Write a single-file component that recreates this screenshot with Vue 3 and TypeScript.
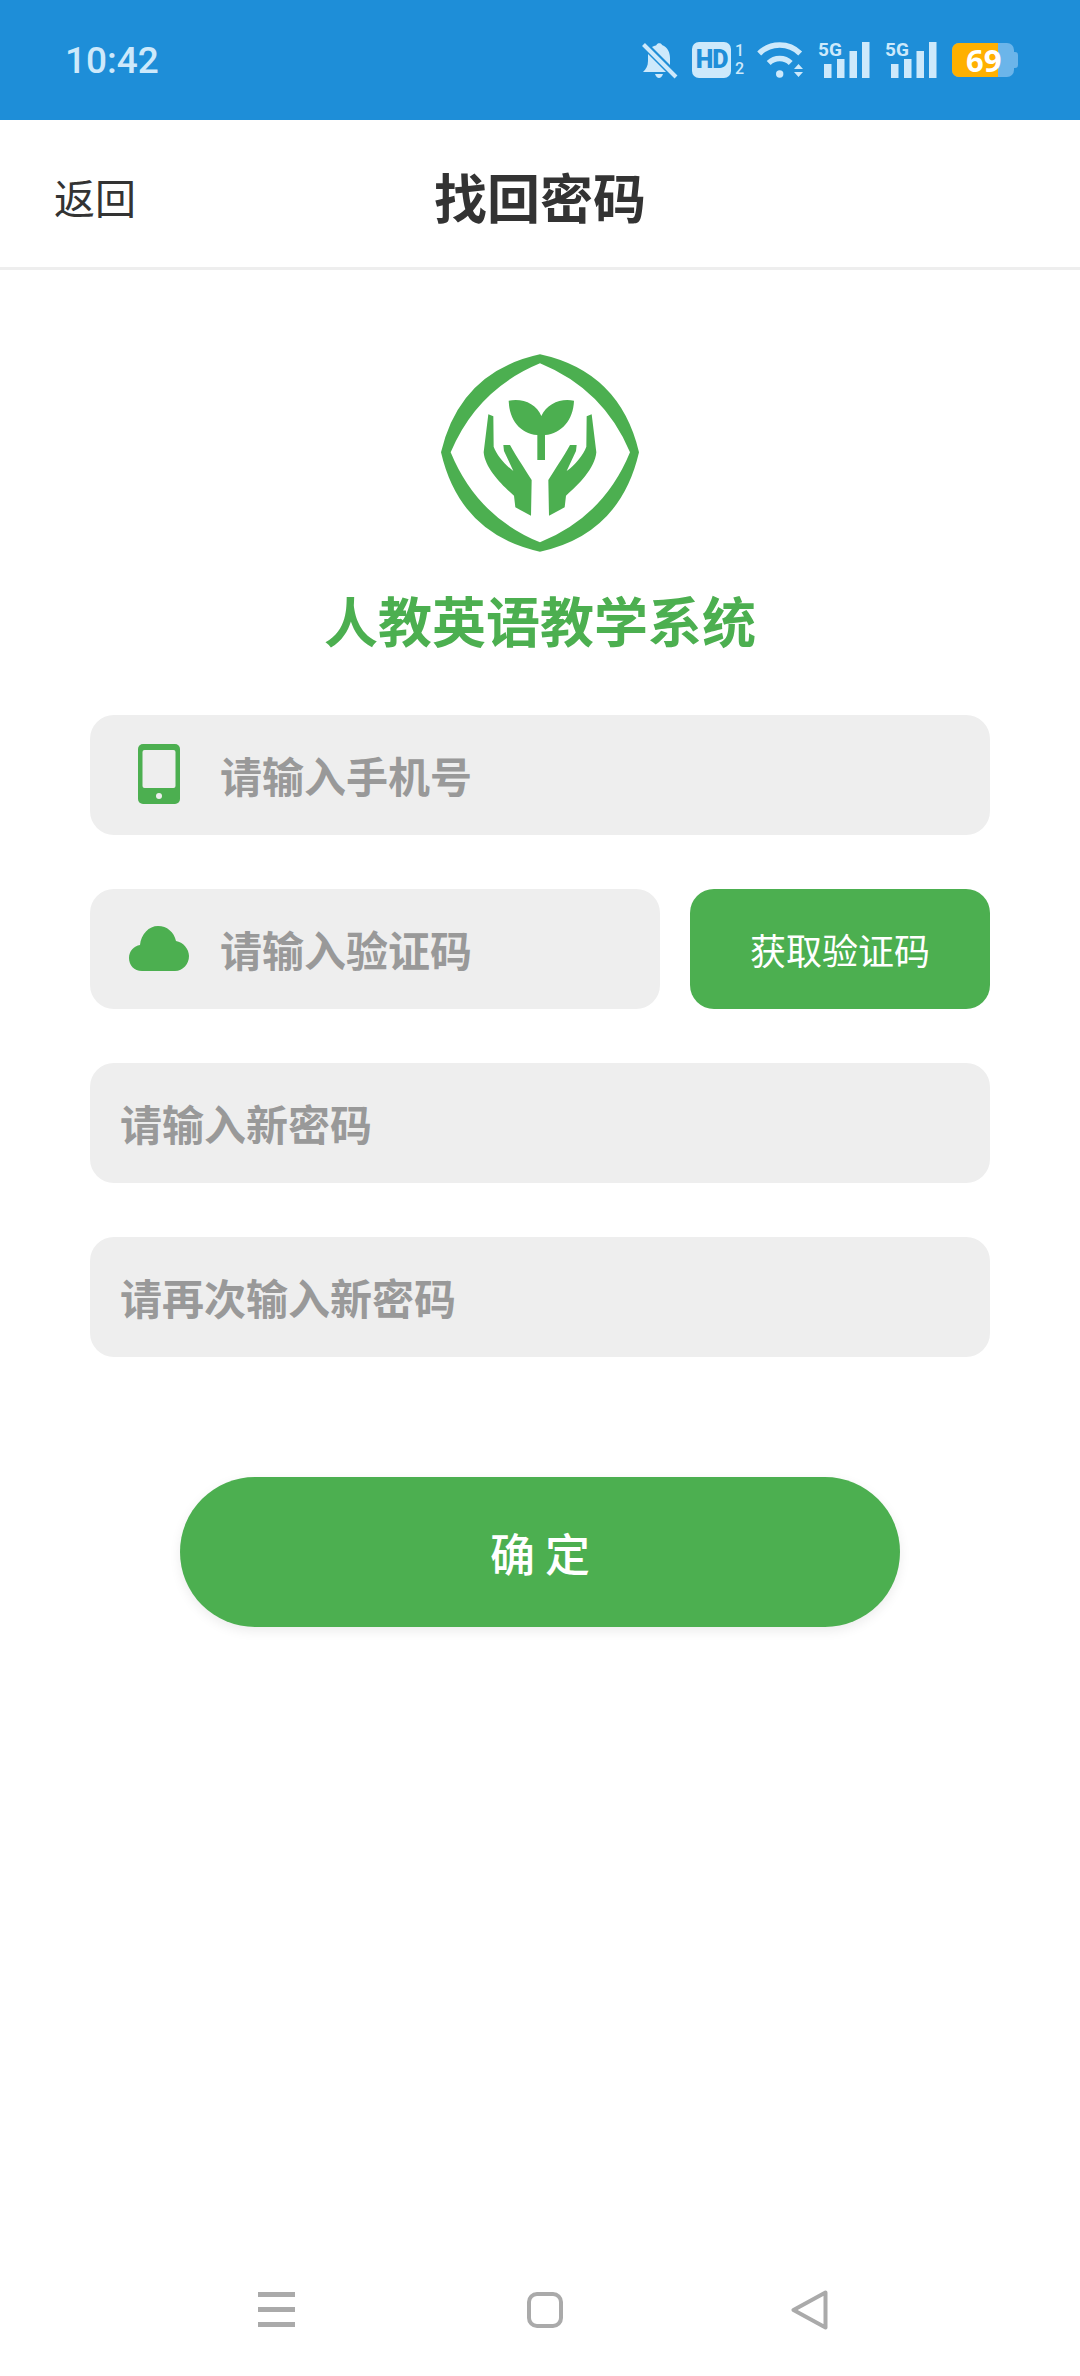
<script setup lang="ts">
import { ref } from 'vue'

const phone = ref('')
const code = ref('')
const newPassword = ref('')
const repeatPassword = ref('')
</script>

<template>
  <div class="page">
    <div class="status-bar">
      <span class="time">10:42</span>
      <div class="status-icons">
        <svg class="bell" width="35" height="36" viewBox="0 0 35 36">
          <path d="M6 12 L24 30 L1 30 C4 27 6 24 6 19 Z" />
          <path d="M10 5 C12 4 14 3.5 14.5 3 C15 0.5 19.5 0.5 20 3 C26 5 28 11 28 16 L28 23 Z" />
          <path d="M13 32 H21 Q19.5 36 17 36 Q14.5 36 13 32 Z" />
          <path d="M1.5 2.5 L34 35" class="slash" />
        </svg>
        <div class="hd">
          <span class="hd-box">HD</span>
          <span class="hd-sims"><i>1</i><i>2</i></span>
        </div>
        <svg class="wifi" width="45" height="36" viewBox="0 0 45 36">
          <path d="M1.2 11.5 A29 29 0 0 1 42.2 11.5" class="arc" />
          <path d="M10.7 21 A15.5 15.5 0 0 1 32.7 21" class="arc" />
          <circle cx="21.7" cy="32" r="3.7" />
          <path d="M36 27 L40.5 22 L45 27 Z M36 30 H45 L40.5 35 Z" />
        </svg>
        <svg v-for="n in 2" :key="n" class="signal" width="52" height="36" viewBox="0 0 52 36">
          <text x="0" y="14" class="net">5G</text>
          <rect x="6" y="22" width="7.5" height="14" />
          <rect x="19" y="17" width="7.5" height="19" />
          <rect x="31.5" y="9" width="7.5" height="27" />
          <rect x="44" y="0" width="7.5" height="36" />
        </svg>
        <div class="battery">
          <div class="battery-fill"></div>
          <span class="battery-level">69</span>
        </div>
      </div>
    </div>

    <header class="top-bar">
      <span class="back">返回</span>
      <h1>找回密码</h1>
    </header>

    <main class="content">
      <svg class="logo" width="198" height="198" viewBox="33 28 594 592">
        <path
          fill-rule="evenodd"
          d="M330 28 Q570 80 627 322 Q570 568 330 620 Q90 568 33 322 Q90 80 330 28 Z
             M330 55 Q141 133 62 322 Q141 515 330 592 Q521 515 600 322 Q521 133 330 55 Z"
        />
        <path d="M236 167 C275 158 320 175 334 213 C350 175 395 158 432 167 C430 225 395 265 345 270 L345 345 L322 345 L322 270 C270 265 238 225 236 167 Z" />
        <path d="M175 208 L190 214 L191 305 C200 330 225 360 250 378 L222 318 L220 300 L240 300 C262 340 290 380 305 405 L303 512 L256 487 L252 452 C215 420 165 370 161 322 Z" />
        <g transform="translate(660 0) scale(-1 1)">
          <path d="M175 208 L190 214 L191 305 C200 330 225 360 250 378 L222 318 L220 300 L240 300 C262 340 290 380 305 405 L303 512 L256 487 L252 452 C215 420 165 370 161 322 Z" />
        </g>
      </svg>
      <div class="app-name">人教英语教学系统</div>

      <form class="form" @submit.prevent>
        <label class="field with-icon">
          <span class="field-icon">
            <svg width="42" height="60" viewBox="0 0 42 60">
              <rect width="42" height="60" rx="5" fill="#4caf50" />
              <rect x="4.5" y="6" width="33" height="38" rx="2" fill="#eeeeee" />
              <circle cx="21" cy="52" r="3" fill="#eeeeee" />
            </svg>
          </span>
          <input v-model="phone" type="tel" placeholder="请输入手机号" />
        </label>

        <div class="code-row">
          <label class="field with-icon">
            <span class="field-icon">
              <svg width="60" height="45" viewBox="0 0 60 45">
                <path fill="#4caf50" d="M13 45 C5 45 0 39 0 32 C0 25 5 20 11 19 C12 8 20 0 29 0 C38 0 45 6 47 15 C54 16 60 23 60 30 C60 38 54 45 46 45 Z" />
              </svg>
            </span>
            <input v-model="code" type="text" placeholder="请输入验证码" />
          </label>
          <button type="button" class="code-btn">获取验证码</button>
        </div>

        <label class="field">
          <input v-model="newPassword" type="password" placeholder="请输入新密码" />
        </label>
        <label class="field">
          <input v-model="repeatPassword" type="password" placeholder="请再次输入新密码" />
        </label>

        <button type="submit" class="confirm-btn">确 定</button>
      </form>
    </main>

    <nav class="nav-bar">
      <svg width="37" height="36" viewBox="0 0 37 36">
        <rect y="0" width="37" height="5" />
        <rect y="15" width="37" height="5" />
        <rect y="30" width="37" height="5" />
      </svg>
      <svg class="nav-square" width="36" height="36" viewBox="0 0 36 36">
        <rect x="2" y="2" width="32" height="32" rx="8" />
      </svg>
      <svg class="nav-back" width="37" height="40" viewBox="0 0 37 40">
        <path d="M34.5 2.5 L2.5 20 L34.5 37.5 Z" />
      </svg>
    </nav>
  </div>
</template>

<style>
html,
body {
  margin: 0;
  background: #fff;
}
</style>

<style scoped>
.page {
  display: flex;
  flex-direction: column;
  width: 1080px;
  height: 2376px;
  background: #fff;
  font-family: "Noto Sans CJK SC", "Noto Sans", sans-serif;
  overflow: hidden;
}

.status-bar {
  display: flex;
  align-items: center;
  justify-content: space-between;
  box-sizing: border-box;
  height: 120px;
  padding: 0 62px 0 65px;
  background: #1e8ed8;
  color: #cde9fb;
}

.time {
  font-family: Roboto, sans-serif;
  font-size: 37px;
  font-weight: 500;
}

.status-icons {
  display: flex;
  align-items: center;
  gap: 15px;
}

.status-icons svg {
  display: block;
  fill: #cde9fb;
  overflow: visible;
}

.slash {
  stroke: #cde9fb;
  stroke-width: 4;
}

.status-icons svg .arc {
  fill: none;
  stroke: #cde9fb;
  stroke-width: 5.5;
}

.status-icons svg .slash {
  fill: none;
}

.net {
  font-family: Roboto, sans-serif;
  font-size: 19px;
  font-weight: 700;
}

.hd {
  display: flex;
  align-items: center;
  gap: 4px;
}

.hd-box {
  width: 39px;
  height: 36px;
  border-radius: 7px;
  background: #cde9fb;
  color: #1e8ed8;
  font-family: Roboto, sans-serif;
  font-size: 25px;
  font-weight: 900;
  line-height: 36px;
  text-align: center;
  letter-spacing: -1px;
}

.hd-sims {
  display: flex;
  flex-direction: column;
  width: 8px;
  font-family: Roboto, sans-serif;
  font-size: 16px;
  font-weight: 500;
  line-height: 18px;
}

.hd-sims i {
  font-style: normal;
}

.battery {
  position: relative;
  width: 62px;
  height: 34px;
  margin-right: 4px;
  border-radius: 7px;
  background: #6bb5ea;
}

.battery::after {
  content: "";
  position: absolute;
  top: 9px;
  right: -4px;
  width: 4px;
  height: 16px;
  border-radius: 0 3px 3px 0;
  background: #6bb5ea;
}

.battery-fill {
  width: 46px;
  height: 100%;
  border-radius: 7px 0 0 7px;
  background: #ffb000;
}

.battery-level {
  position: absolute;
  top: 0;
  left: 14px;
  color: #fff;
  font-family: "Open Sans", sans-serif;
  font-size: 31px;
  font-weight: 700;
  line-height: 34px;
}

.top-bar {
  display: grid;
  grid-template-columns: 1fr auto 1fr;
  align-items: center;
  box-sizing: border-box;
  height: 150px;
  padding: 4px 54px 0;
  border-bottom: 3px solid #eeeeee;
}

.back {
  color: #333;
  font-size: 41px;
}

.top-bar h1 {
  margin: 0;
  color: #333;
  font-size: 53px;
  font-weight: 700;
}

.content {
  display: flex;
  flex-direction: column;
  align-items: center;
}

.logo {
  display: block;
  margin-top: 84px;
  fill: #4caf50;
}

.app-name {
  margin-top: 38px;
  color: #4caf50;
  font-size: 54px;
  font-weight: 700;
  line-height: 60px;
}

.form {
  display: flex;
  flex-direction: column;
  gap: 54px;
  width: 900px;
  margin-top: 65px;
}

.field {
  display: flex;
  align-items: center;
  box-sizing: border-box;
  height: 120px;
  padding: 0 30px 2px;
  border-radius: 24px;
  background: #eeeeee;
}

.field.with-icon {
  padding-left: 38px;
}

.field-icon {
  display: flex;
  flex-shrink: 0;
  align-items: center;
  justify-content: center;
  width: 62px;
  margin-right: 30px;
}

.field input {
  flex: 1;
  min-width: 0;
  padding: 0;
  border: none;
  outline: none;
  background: transparent;
  color: #333;
  font-family: inherit;
  font-size: 42px;
  font-weight: 700;
}

.field input::placeholder {
  color: #999999;
  opacity: 1;
}

.code-row {
  display: flex;
  gap: 30px;
}

.code-row .field {
  flex: 1;
  min-width: 0;
}

.code-btn {
  flex-shrink: 0;
  width: 300px;
  height: 120px;
  padding: 0;
  border: none;
  border-radius: 24px;
  background: #4caf50;
  color: #fff;
  font-family: inherit;
  font-size: 36px;
}

.confirm-btn {
  align-self: center;
  width: 720px;
  height: 150px;
  margin-top: 66px;
  padding: 0;
  border: none;
  border-radius: 75px;
  background: #4caf50;
  box-shadow: 0 4px 12px rgba(0, 0, 0, 0.08);
  color: #fff;
  font-family: inherit;
  font-size: 45px;
  font-weight: 500;
}

.nav-bar {
  display: flex;
  align-items: center;
  gap: 232px;
  margin-top: auto;
  padding: 0 0 46px 258px;
}

.nav-bar svg {
  display: block;
  fill: #aaaaaa;
}

.nav-bar .nav-back {
  margin-left: -4px;
}

.nav-square,
.nav-back {
  stroke: #aaaaaa;
  stroke-width: 4;
  stroke-linejoin: round;
}

.nav-bar .nav-square,
.nav-bar .nav-back {
  fill: none;
}
</style>
